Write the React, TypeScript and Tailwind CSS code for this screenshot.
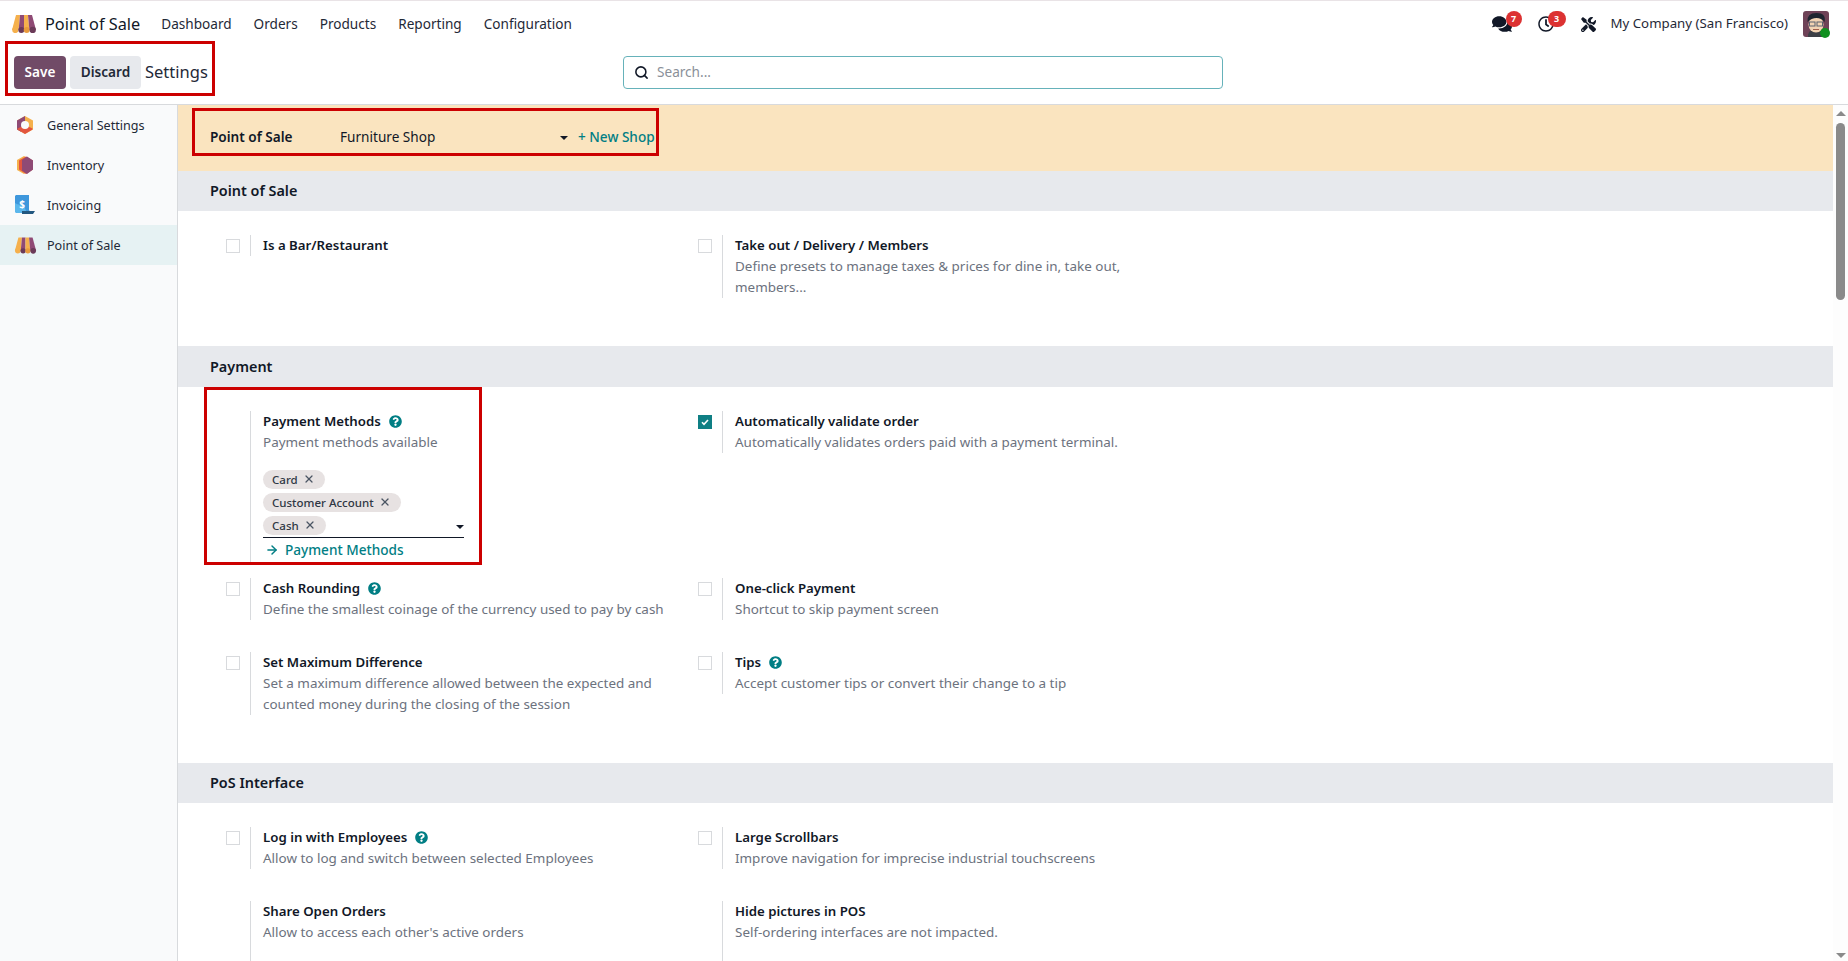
import type { ReactNode } from "react";
import { FaComments, FaQuestionCircle, FaRegClock, FaTools } from "react-icons/fa";
import { ArrowRight, Search, X } from "lucide-react";

const PosLogo = ({ className }: { className: string }) => (
  <svg className={className} viewBox="0 0 26 18">
    <path d="M5 0h4l-1.400 15H1z" fill="#f5b04c" />
    <path d="M9 0h4v15H7.600z" fill="#8f4a75" />
    <path d="M13 0h4l1.400 15H13z" fill="#f5b04c" />
    <path d="M17 0h4l4 15h-6.600z" fill="#8f4a75" />
    <circle cx="4.300" cy="15" r="3.100" fill="#f5b04c" />
    <circle cx="10.300" cy="15" r="3" fill="#6b3a58" />
    <circle cx="15.700" cy="15" r="3" fill="#e89a3c" />
    <circle cx="21.700" cy="15" r="3.200" fill="#6b3a58" />
  </svg>
);

const SettingsLogo = () => (
  <svg className="w-[20px] h-[20px] ml-[1px]" viewBox="0 0 20 20">
    <path d="M10 1l8 4.500v9L10 19l-8-4.500v-9z" fill="#f5b04c" />
    <path d="M10 1L2 5.500v9l4 2.200L10 10z" fill="#8f4a75" />
    <path d="M2.500 13.500L10 10l7.500 3.500v1L10 19l-7.500-4.500z" fill="#e2553f" />
    <circle cx="10" cy="10" r="4" fill="#f9fafb" />
  </svg>
);

const InventoryLogo = () => (
  <svg className="w-[20px] h-[20px] ml-[1px]" viewBox="0 0 20 20">
    <path d="M9 1l7 4v10l-7 4-7-4V5z" fill="#f5b04c" />
    <path d="M11 1.500l7 4v9l-7 4.500-7-4.500v-9z" fill="#e2553f" />
    <path d="M12 1.500l6 4v9l-6 4.500-5-3.500V5z" fill="#8f4a75" />
  </svg>
);

const InvoicingLogo = () => (
  <svg className="w-[21px] h-[20px]" viewBox="0 0 21 20">
    <path d="M2 0h13v15l2 3H4q-3 0-3-2V1z" fill="#3e97dc" />
    <path d="M1 8q4 3 8 1l4 9H4q-3 0-3-2z" fill="#5bb7ec" />
    <text x="8" y="12.500" textAnchor="middle" fontSize="10" fontWeight="700" fill="#ffffff" fontFamily="Noto Sans, sans-serif">$</text>
    <path d="M8 16h13l-2 3H8z" fill="#22577f" />
  </svg>
);

const Avatar = () => (
  <div className="relative w-[26px] h-[26px]">
    <svg className="w-[26px] h-[26px] rounded-[3px]" viewBox="0 0 26 26">
      <rect width="26" height="26" fill="#6e4257" />
      <path d="M5 26q0-8 8-8t8 8z" fill="#3c3f46" />
      <ellipse cx="13" cy="13.500" rx="7.500" ry="8" fill="#f2d3b3" />
      <path d="M4.500 11q-1-9 9-9t8 9q-3-4-8-4t-9 4z" fill="#1e2530" />
      <rect x="6.500" y="11" width="5.500" height="4" fill="none" stroke="#58616e" strokeWidth="1" />
      <rect x="14" y="11" width="5.500" height="4" fill="none" stroke="#58616e" strokeWidth="1" />
      <path d="M10 18.500h6" stroke="#a3604e" strokeWidth="1" />
    </svg>
    <span className="absolute right-[-1px] bottom-[-1px] w-[10px] h-[10px] rounded-full bg-[#0f8f1f]" />
  </div>
);

const Caret = () => <span className="w-0 h-0 border-x-[4px] border-x-transparent border-t-[4px] border-t-[#111827]" />;

const Help = () => <FaQuestionCircle className="ml-[8px] w-[13px] h-[13px] text-[#017e84]" />;

const Check = ({ state }: { state: "off" | "on" | "none" }) => {
  if (state === "none") return <div className="w-[24px] shrink-0" />;
  return (
    <div className="w-[24px] shrink-0 pt-[3.500px]">
      {state === "on" ? (
        <div className="w-[14px] h-[14px] bg-[#0f7f84] flex items-center justify-center">
          <svg className="w-[8px] h-[8px]" viewBox="0 0 8 8">
            <path d="M1 4.300l2 2 4-4.300" fill="none" stroke="#ffffff" strokeWidth="1.600" />
          </svg>
        </div>
      ) : (
        <div className="w-[14px] h-[14px] bg-white border border-[#d8dadd]" />
      )}
    </div>
  );
};

type SettingProps = {
  state?: "off" | "on" | "none";
  title: string;
  desc?: string;
  help?: boolean;
  tall?: boolean;
  children?: ReactNode;
};

const Setting = ({ state = "off", title, desc, help, tall, children }: SettingProps) => (
  <div className="relative flex items-start">
    <Check state={state} />
    <div className={`flex-1 border-l border-[#d8dadd] pl-[12px] ${tall ? "h-[64px]" : ""}`}>
      <div className="flex items-center h-[21px] text-[13.250px] font-semibold text-[#111827]">
        {title}
        {help && <Help />}
      </div>
      {desc && <p className="text-[13.450px] leading-[21px] -mt-[0.500px] mb-[0.500px] text-[#6c727e]">{desc}</p>}
      {children}
    </div>
  </div>
);

const Tag = ({ label }: { label: string }) => (
  <span className="inline-flex items-center h-[19px] rounded-full bg-[#e7e2e2] pl-[9px] pr-[10px] gap-[5px] text-[11.500px] font-medium text-[#2f3744]">
    {label}
    <X className="w-[12px] h-[12px] text-[#4b5563] -mt-[2px]" strokeWidth={2.500} />
  </span>
);

const SectionTitle = ({ children, h = "h-[40px]" }: { children: string; h?: string }) => (
  <div className={`${h} bg-[#e7e9ed] flex items-center pl-[32px] text-[14.400px] font-semibold text-[#111827]`}>
    {children}
  </div>
);

const Row = ({ mt, children }: { mt: string; children: ReactNode }) => (
  <div className={`grid grid-cols-[472px_472px] items-start pl-[48px] ${mt}`}>{children}</div>
);

const navItems = ["Dashboard", "Orders", "Products", "Reporting", "Configuration"];

const sideItems = [
  { label: "General Settings", logo: <SettingsLogo /> },
  { label: "Inventory", logo: <InventoryLogo /> },
  { label: "Invoicing", logo: <InvoicingLogo /> },
  { label: "Point of Sale", logo: <PosLogo className="w-[23px] h-[17px]" />, active: true },
];

const App = () => {
  return (
    <div className="h-screen overflow-hidden flex flex-col bg-white font-['Noto_Sans',sans-serif]">
      <div className="h-[1px] bg-[#e9e3e6]" />

      <header className="h-[46px] shrink-0 flex items-center pl-[11px] pr-[19px] text-[#1f2937]">
        <PosLogo className="w-[26px] h-[18px]" />
        <span className="ml-[8px] text-[16.300px] text-[#111827]">Point of Sale</span>
        <nav className="ml-[21px] flex gap-[22px] text-[13.600px]">
          {navItems.map((item) => (
            <span key={item}>{item}</span>
          ))}
        </nav>
        <div className="ml-auto flex items-center text-[#111827]">
          <div className="relative mr-[26px]">
            <FaComments className="w-[20px] h-[18px]" />
            <span className="absolute -top-[4px] left-[14px] w-[16px] h-[16px] rounded-full bg-[#dc3232] text-white text-[9px] font-bold flex items-center justify-center">7</span>
          </div>
          <div className="relative mr-[27px]">
            <FaRegClock className="w-[16px] h-[16px]" />
            <span className="absolute -top-[5px] left-[10px] w-[18px] h-[16px] rounded-full bg-[#dc3232] text-white text-[9px] font-bold flex items-center justify-center">3</span>
          </div>
          <FaTools className="w-[15px] h-[15px] mr-[15px]" />
          <span className="text-[13.250px] text-[#1f2937] mr-[15px]">My Company (San Francisco)</span>
          <Avatar />
        </div>
      </header>

      <div className="relative h-[57px] shrink-0 flex items-center pl-[14px] border-b border-[#d8dadd] box-content">
        <div className="w-[609px] flex items-center mb-[7px]">
          <button className="w-[52px] h-[33px] rounded-[4px] bg-[#714b67] text-white text-[13.600px] font-semibold">Save</button>
          <button className="ml-[4px] w-[71px] h-[33px] rounded-[4px] bg-[#e7e9ed] text-[#1f2937] text-[13.600px] font-semibold">Discard</button>
          <span className="ml-[4px] text-[16.500px] text-[#1f2937]">Settings</span>
        </div>
        <div className="w-[600px] h-[33px] mb-[7px] rounded-[4px] border border-[#66b2ba] flex items-center pl-[10px]">
          <Search className="w-[15px] h-[15px] text-[#111827]" strokeWidth={2.500} />
          <span className="ml-[8px] text-[13.600px] text-[#8a9099]">Search...</span>
        </div>
        <div className="absolute -top-[6px] left-[5px] w-[210px] h-[55px] border-[3px] border-[#cc0000] z-10" />
      </div>

      <div className="flex-1 flex min-h-0">
        <aside className="w-[178px] shrink-0 bg-[#f9fafb] border-r border-[#d8dadd]">
          {sideItems.map((item) => (
            <div key={item.label} className={`h-[40px] flex items-center ${item.active ? "bg-[#e6f2f3]" : ""}`}>
              <div className="w-[47px] pl-[14px] flex justify-start">{item.logo}</div>
              <span className="text-[12.600px] text-[#1f2937] mt-[2px]">{item.label}</span>
            </div>
          ))}
        </aside>

        <main className="flex-1 min-w-0 overflow-hidden">
          <div className="relative h-[66px] bg-[#fae4bf] flex items-center pl-[32px] text-[13.600px] text-[#111827]">
            <span className="w-[130px] font-semibold mb-[2px]">Point of Sale</span>
            <span className="w-[220px] mb-[2px]">Furniture Shop</span>
            <Caret />
            <span className="ml-[10px] text-[#017e84] font-medium mb-[2px]">+ New Shop</span>
            <div className="absolute top-[3px] left-[14px] w-[467px] h-[48px] border-[3px] border-[#cc0000]" />
          </div>

          <SectionTitle>Point of Sale</SectionTitle>
          <Row mt="pt-[24px] pb-[48px]">
            <Setting title="Is a Bar/Restaurant" />
            <Setting title="Take out / Delivery / Members" desc="Define presets to manage taxes & prices for dine in, take out, members..." />
          </Row>

          <SectionTitle h="h-[41px] pt-[1px]">Payment</SectionTitle>
          <Row mt="pt-[24px]">
            <Setting state="none" title="Payment Methods" desc="Payment methods available" help>
              <div className="mt-[17.500px] w-[201px] relative border-b border-[#111827] h-[68px]">
                <div className="flex flex-col items-start gap-[4px]">
                  <Tag label="Card" />
                  <Tag label="Customer Account" />
                  <Tag label="Cash" />
                </div>
                <span className="absolute right-0 bottom-[8px] flex"><Caret /></span>
              </div>
              <div className="h-[24px] flex items-center pl-[2px] text-[13.600px] font-medium text-[#017e84]">
                <ArrowRight className="w-[14px] h-[14px] mr-[6px]" strokeWidth={2.500} />
                Payment Methods
              </div>
              <div className="absolute -top-[24px] -left-[22px] w-[278px] h-[178px] border-[3px] border-[#cc0000]" />
            </Setting>
            <Setting state="on" title="Automatically validate order" desc="Automatically validates orders paid with a payment terminal." />
          </Row>
          <Row mt="mt-[16px]">
            <Setting title="Cash Rounding" desc="Define the smallest coinage of the currency used to pay by cash" help />
            <Setting title="One-click Payment" desc="Shortcut to skip payment screen" />
          </Row>
          <Row mt="mt-[32px] pb-[48px]">
            <Setting title="Set Maximum Difference" desc="Set a maximum difference allowed between the expected and counted money during the closing of the session" />
            <Setting title="Tips" desc="Accept customer tips or convert their change to a tip" help />
          </Row>

          <SectionTitle>PoS Interface</SectionTitle>
          <Row mt="pt-[24px]">
            <Setting title="Log in with Employees" desc="Allow to log and switch between selected Employees" help />
            <Setting title="Large Scrollbars" desc="Improve navigation for imprecise industrial touchscreens" />
          </Row>
          <Row mt="mt-[32px]">
            <Setting state="none" tall title="Share Open Orders" desc="Allow to access each other's active orders" />
            <Setting state="none" tall title="Hide pictures in POS" desc="Self-ordering interfaces are not impacted." />
          </Row>
        </main>

        <div className="w-[15px] shrink-0 bg-[#fdfdfd] flex flex-col items-center pt-[6px] pb-[3px]">
          <span className="w-0 h-0 border-x-[5px] border-x-transparent border-b-[5px] border-b-[#8a8a8a]" />
          <div className="mt-[7px] w-[9px] h-[177px] rounded-full bg-[#8a8a8a]" />
          <span className="mt-auto w-0 h-0 border-x-[5px] border-x-transparent border-t-[5px] border-t-[#8a8a8a]" />
        </div>
      </div>
    </div>
  );
};

export default App;
